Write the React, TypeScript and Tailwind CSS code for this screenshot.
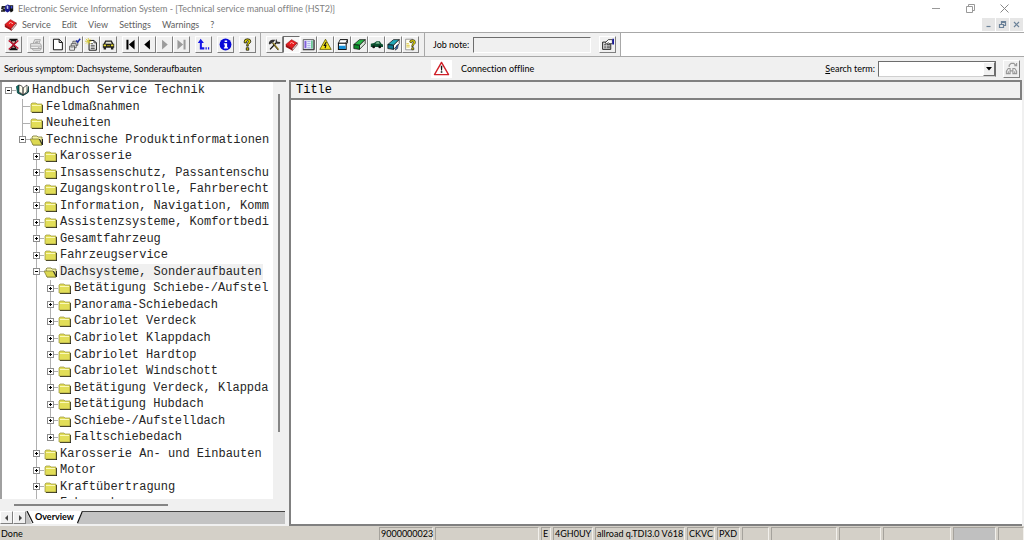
import React from "react";

type IconName =
  | "exit" | "print" | "page" | "copies" | "newnote" | "car" | "first" | "prev" | "next" | "last"
  | "back" | "info" | "help" | "tools" | "book" | "panel" | "warn" | "box" | "greenbook" | "greencar"
  | "tealbook" | "note";

const K = "#111";

const drawings: Record<IconName, React.ReactNode> = {
  exit: (
    <>
      <path d="M3 1h10v2H3zM3 13h10v2H3zM5 3h6v3L9 8l2 3v2H5v-2l2-3-2-2z" fill={K} />
      <path d="M6 4h4v1L8 7 6 5zM6 12l2-2 2 2z" fill="#d9b0a8" />
      <path d="M2 3l12 10M14 3L2 14" stroke="#c8102a" strokeWidth="1.5" fill="none" />
    </>
  ),
  print: (
    <g fill="none" stroke="#a6a6a6" strokeWidth="1.2">
      <path d="M5 7l2-5h7l-2 5M2 7h12l1 2v4H2zM2 10h13M4 13l1 2h9l1-2M8 4h4M7 5.500h4M11 12h2" />
    </g>
  ),
  page: <path d="M3 1.500h7l4 4v9H3zM10 1.500v4h4" fill="#fff" stroke={K} strokeWidth="1.200" />,
  copies: (
    <>
      <g fill="#fff" stroke="#444" strokeWidth="1">
        <path d="M6 4h6v5H6z" />
        <path d="M4 7h6v5H4z" />
        <path d="M2 10h6v5H2z" />
      </g>
      <path d="M7 6h4M5 9h4M3 12h4" stroke="#777" />
      <path d="M10 3l2 2 3-4" stroke="#1b2ca8" strokeWidth="1.800" fill="none" />
    </>
  ),
  newnote: (
    <>
      <path d="M5 3h6l3 3v9H5z" fill="#fff" stroke={K} strokeWidth="1.200" />
      <path d="M11 3v3h3M7 7h3M7 9h5M7 11h5M7 13h5" stroke="#333" fill="none" />
      <path d="M1 1l6 6M7 1L1 7M4 0v8M0 4h8" stroke="#d8ca30" strokeWidth="1" />
    </>
  ),
  car: (
    <>
      <path d="M4 3h8l2 4h1v5h-1v2h-3v-2H5v2H2v-2H1V7h1z" fill="#222" />
      <path d="M5 4.500h6l1 2.500H4z" fill="#e2e2d0" />
      <path d="M2 8h3v2H2zM11 8h3v2h-3z" fill="#e8dc30" />
      <path d="M6 9h4v1H6z" fill="#c0b000" />
    </>
  ),
  first: <path d="M3 2h2.500v12H3zM13 2v12L6 8z" fill="#000" />,
  prev: <path d="M11 2v12L4 8z" fill="#000" />,
  next: <path d="M5 2v12l7-6z" fill="#9b9b9b" />,
  last: <path d="M3 2v12l7-6zM10.500 2H13v12h-2.500z" fill="#9b9b9b" />,
  back: (
    <path d="M4.500 1L1 6h2.500v8H9v-2.500H6V6h2.500zM10.500 11.500H12V14h-1.500zM13.500 11.500H15V14h-1.500z" fill="#1414e6" />
  ),
  info: (
    <>
      <circle cx="8" cy="8" r="7.300" fill="#0808d8" />
      <path d="M7 3h3v2H7zM6 6.500h4v5h1V13H6v-1.500h1V8H6z" fill="#fff" />
    </>
  ),
  help: (
    <>
      <path d="M4 6V4q0-3 4-3t4 3q0 2-2 3T9 10H7q0-3 1-4t1-2q0-1-1-1T6.500 6z" fill="#e0d400" stroke={K} strokeWidth="1" />
      <path d="M6.500 12h3v3h-3z" fill="#e0d400" stroke={K} strokeWidth="1" />
    </>
  ),
  tools: (
    <>
      <path d="M2.500 14L11 5" stroke={K} strokeWidth="1.600" fill="none" />
      <path d="M6 6l7 8.500" stroke="#a08c30" strokeWidth="2" />
      <path d="M5.500 6.500l7 8.500" stroke={K} strokeWidth=".8" />
      <path d="M1 7q0-4 4-5h4L7 5 5 6 2 8zM10 1l1.500 3.500L15 5v1.500q-3 1.500-5-.5-1.500-2 0-5z" fill="#333" />
    </>
  ),
  book: (
    <>
      <path d="M1 8l7-6 7 4-6 7z" fill="#e81c20" stroke="#8a0a0c" strokeWidth=".7" />
      <path d="M1 8l8 5v2.500L1 11z" fill="#9d0c10" />
      <path d="M9 13l6-7v2.500l-6 7z" fill="#fff" stroke="#6d0b0b" strokeWidth=".8" />
      <path d="M6 7l2-1.500L11 7" stroke="#ffb9b0" strokeWidth="1.200" fill="none" />
    </>
  ),
  panel: (
    <>
      <path d="M1.500 2h13v12h-13z" fill="#f4f4ff" stroke="#444" />
      <path d="M3 3.500h2.500v9H3z" fill="#8060d8" />
      <path d="M6.500 4.500h4M6.500 7h4M6.500 9.500h4M6.500 12h4" stroke="#7a8cd8" strokeWidth=".9" />
      <path d="M11.500 3h1.500v10h-1.500z" fill="#28b060" />
      <path d="M1 14.500h14v-12" stroke="#222" fill="none" />
    </>
  ),
  warn: (
    <>
      <path d="M8 1.500L15 14H1z" fill="#f2e21a" stroke="#5a5400" strokeWidth="1" />
      <path d="M9 5L6.500 9H8.500L7.500 12.500" stroke={K} strokeWidth="1.400" fill="none" />
    </>
  ),
  box: (
    <>
      <path d="M5 2h9v4l-2 2" fill="#fff" stroke={K} strokeWidth="1.200" />
      <path d="M5 2L3 6.500h9L14 2z" fill="#fff" stroke={K} />
      <path d="M3 6.500h9.500V14H3z" fill="#fff" stroke={K} strokeWidth="1.300" />
      <path d="M3.600 9.500h8.300v4H3.600z" fill="#1690d8" />
    </>
  ),
  greenbook: (
    <>
      <path d="M1 8l7-6h7L8 9z" fill="#28b848" stroke={K} strokeWidth=".9" />
      <path d="M8 9l7-7v5l-7 7z" fill="#d8e8d8" stroke={K} strokeWidth=".9" />
      <path d="M1 8l7 1v5l-7-1z" fill="#0d8c2a" stroke={K} strokeWidth=".9" />
    </>
  ),
  greencar: (
    <>
      <path d="M1 7l4-1 3-2h4l2 3 2 1v3H1z" fill="#0c5030" />
      <path d="M7 6l1.500-1H11l1 2H7z" fill="#7fb895" />
      <circle cx="4.500" cy="11" r="1.700" fill={K} />
      <circle cx="12" cy="11" r="1.700" fill={K} />
    </>
  ),
  tealbook: (
    <>
      <path d="M1 8l7-6h7L8 9z" fill="#22a8b8" stroke={K} strokeWidth=".9" />
      <path d="M8 9l7-7v5l-7 7z" fill="#fff" stroke={K} strokeWidth=".9" />
      <path d="M1 8l7 1v5l-7-1z" fill="#0e7890" stroke={K} strokeWidth=".9" />
      <path d="M10 15l2-6 2-1-1 5z" fill="#3c6cc0" stroke={K} strokeWidth=".6" />
    </>
  ),
  note: (
    <>
      <path d="M2 1.500h9v13H2z" fill="#fffef0" stroke="#888" />
      <path d="M7 5q0-3 3.500-3T14 5q0 2-1.500 3T11 10.500H9.500q0-2 1-3T11.500 5q0-1-1-1T9 6z" fill="#f0e400" stroke={K} strokeWidth=".8" />
      <path d="M9.500 12H12v2.500H9.500z" fill="#f0e400" stroke={K} strokeWidth=".8" />
      <path d="M3 7h3M3 9h4M3 11h4" stroke="#d8c020" />
    </>
  ),
};

function Icon({ name }: { name: IconName }) {
  return (
    <svg viewBox="0 0 16 16" className="size-[13px] shrink-0" aria-hidden="true">
      {drawings[name]}
    </svg>
  );
}

function ToolButton({ name, label, pressed = false, disabled = false }: {
  name: IconName; label: string; pressed?: boolean; disabled?: boolean;
}) {
  const edge = pressed
    ? "border-t-[#6d6d6d] border-l-[#6d6d6d] border-r-white border-b-white bg-[#f8f8f8]"
    : "border-t-white border-l-white border-r-[#808080] border-b-[#808080] bg-[#f0f0f0]";
  return (
    <button
      type="button"
      aria-label={label}
      disabled={disabled}
      className={`flex size-[17px] shrink-0 items-center justify-center border ${edge}`}
    >
      <Icon name={name} />
    </button>
  );
}

type Tool = { name: IconName; label: string; pressed?: boolean; disabled?: boolean };

const mainTools: Tool[][] = [
  [{ name: "exit", label: "Exit" }],
  [{ name: "print", label: "Print", disabled: true }],
  [
    { name: "page", label: "New" },
    { name: "copies", label: "Select documents" },
    { name: "newnote", label: "New note" },
    { name: "car", label: "Vehicle" },
  ],
  [
    { name: "first", label: "First" },
    { name: "prev", label: "Previous" },
    { name: "next", label: "Next", disabled: true },
    { name: "last", label: "Last", disabled: true },
  ],
  [{ name: "back", label: "Back" }],
  [{ name: "info", label: "Information" }],
  [{ name: "help", label: "Help" }],
];

const moduleTools: Tool[] = [
  { name: "tools", label: "Workshop" },
  { name: "book", label: "Service manual", pressed: true },
  { name: "panel", label: "Wiring" },
  { name: "warn", label: "Campaigns" },
  { name: "box", label: "Parts" },
  { name: "greenbook", label: "Maintenance" },
  { name: "greencar", label: "Vehicle data" },
  { name: "tealbook", label: "Repair manuals" },
  { name: "note", label: "Hints" },
];

type Kind = "plus" | "minus" | "leaf";
type Node = { text: string; level: number; kind: Kind; icon: "manual" | "folder" | "open"; selected?: boolean; end?: boolean };

const nodes: Node[] = [
  { text: "Handbuch Service Technik", level: 0, kind: "minus", icon: "manual", end: true },
  { text: "Feldmaßnahmen", level: 1, kind: "leaf", icon: "folder" },
  { text: "Neuheiten", level: 1, kind: "leaf", icon: "folder" },
  { text: "Technische Produktinformationen", level: 1, kind: "minus", icon: "open", end: true },
  { text: "Karosserie", level: 2, kind: "plus", icon: "folder" },
  { text: "Insassenschutz, Passantenschu", level: 2, kind: "plus", icon: "folder" },
  { text: "Zugangskontrolle, Fahrberecht", level: 2, kind: "plus", icon: "folder" },
  { text: "Information, Navigation, Komm", level: 2, kind: "plus", icon: "folder" },
  { text: "Assistenzsysteme, Komfortbedi", level: 2, kind: "plus", icon: "folder" },
  { text: "Gesamtfahrzeug", level: 2, kind: "plus", icon: "folder" },
  { text: "Fahrzeugservice", level: 2, kind: "plus", icon: "folder" },
  { text: "Dachsysteme, Sonderaufbauten", level: 2, kind: "minus", icon: "open", selected: true },
  { text: "Betätigung Schiebe-/Aufstel", level: 3, kind: "plus", icon: "folder" },
  { text: "Panorama-Schiebedach", level: 3, kind: "plus", icon: "folder" },
  { text: "Cabriolet Verdeck", level: 3, kind: "plus", icon: "folder" },
  { text: "Cabriolet Klappdach", level: 3, kind: "plus", icon: "folder" },
  { text: "Cabriolet Hardtop", level: 3, kind: "plus", icon: "folder" },
  { text: "Cabriolet Windschott", level: 3, kind: "plus", icon: "folder" },
  { text: "Betätigung Verdeck, Klappda", level: 3, kind: "plus", icon: "folder" },
  { text: "Betätigung Hubdach", level: 3, kind: "plus", icon: "folder" },
  { text: "Schiebe-/Aufstelldach", level: 3, kind: "plus", icon: "folder" },
  { text: "Faltschiebedach", level: 3, kind: "plus", icon: "folder", end: true },
  { text: "Karosserie An- und Einbauten", level: 2, kind: "plus", icon: "folder" },
  { text: "Motor", level: 2, kind: "plus", icon: "folder" },
  { text: "Kraftübertragung", level: 2, kind: "plus", icon: "folder" },
];

function Expander({ kind }: { kind: Kind }) {
  if (kind === "leaf") {
    return (
      <span className="flex h-[7px] shrink-0 items-center pl-1">
        <span className="h-full w-px bg-[#b0b0b0]" />
        <span className="h-px flex-1 bg-[#b0b0b0]" />
      </span>
    );
  }
  return (
    <span className="flex shrink-0 items-center pl-px">
      <span className="grid size-[7px] place-items-center border border-[#8c8c8c] bg-white">
        <span className="col-start-1 row-start-1 h-px w-[3px] bg-black" />
        {kind === "plus" && <span className="col-start-1 row-start-1 h-[3px] w-px bg-black" />}
      </span>
      <span className="h-px flex-1 bg-[#b0b0b0]" />
    </span>
  );
}

function NodeIcon({ icon }: { icon: Node["icon"] }) {
  return (
    <svg viewBox="0 0 13 12" className="h-[12px] w-[13px] shrink-0" aria-hidden="true">
      {icon === "manual" && (
        <>
          <path d="M.5 2.500L3 1v7.500l4 2.500 5.500-3V2.500L11.500 9 7 11.500 1.500 9z" fill="#0d7e74" stroke="#083c3a" strokeWidth=".8" />
          <path d="M3 1q3 0 4 3v7Q6 8.500 3 8.500zM7 4l4-3v6.500L7 11z" fill="#fffef0" stroke="#222" strokeWidth=".7" />
        </>
      )}
      {icon === "folder" && (
        <>
          <path d="M2 3h5l1 1h5v8H2z" fill="#222" />
          <path d="M1 3l1-1h4l1 1h5v8H1z" fill="#e2de58" stroke="#98943c" strokeWidth=".7" />
          <path d="M2 4.500h9" stroke="#fbf9b8" />
        </>
      )}
      {icon === "open" && (
        <>
          <path d="M2 3l1-1h4l1 1h4v8H3z" fill="#f7f5a8" stroke="#77752e" strokeWidth=".8" />
          <path d="M0 5h9l3 6H3z" fill="#dcd850" stroke="#77752e" strokeWidth=".7" />
          <path d="M9.500 5l3 6V5" fill="none" stroke="#222" />
        </>
      )}
    </svg>
  );
}

function TreeRow({ node }: { node: Node }) {
  const above = node.level > 0 ? "bg-[#b0b0b0]" : "bg-transparent";
  const below = node.end ? "bg-transparent" : "bg-[#b0b0b0]";
  return (
    <li
      role="treeitem"
      aria-level={node.level + 1}
      aria-selected={!!node.selected}
      className="flex min-h-0 flex-1 basis-0 items-stretch whitespace-nowrap"
    >
      {Array.from({ length: node.level }, (_, i) => (
        <span key={i} className="flex w-[14px] shrink-0 pl-[6px]">
          <span className={i === 2 ? "w-px bg-[#b0b0b0]" : "w-px"} />
        </span>
      ))}
      <span className="flex w-[14px] shrink-0 flex-col pl-[2px]">
        <span className={`ml-1 w-px flex-1 ${above}`} />
        <Expander kind={node.kind} />
        <span className={`ml-1 w-px flex-1 ${below}`} />
      </span>
      <span className="flex items-center gap-[2px]">
        <NodeIcon icon={node.icon} />
        <span className={`px-px leading-4 ${node.selected ? "bg-[#f0f0f0]" : ""}`}>{node.text}</span>
      </span>
    </li>
  );
}

const statusCells = [
  { text: "9000000023", width: "w-[54px]" },
  { text: "", width: "w-[104px]" },
  { text: "E", width: "w-[10px]" },
  { text: "4GH0UY", width: "w-[40px]" },
  { text: "allroad q.TDI3.0 V618", width: "w-[90px]" },
  { text: "CKVC", width: "w-[28px]" },
  { text: "PXD", width: "w-[23px]" },
  { text: "", width: "w-[27px]" },
  { text: "", width: "w-[66px]" },
  { text: "", width: "w-[42px]" },
  { text: "", width: "w-[68px]" },
  { text: "", width: "w-[43px] bg-[#c0c0c0]" },
  { text: "", width: "w-[26px]" },
];

export default function App() {
  return (
    <div className="flex h-screen flex-col overflow-hidden bg-[#f0f0f0] font-['Lato','Open_Sans',sans-serif] text-[9px] leading-3 text-black [font-variant-ligatures:none]">
      <header className="shrink-0 bg-white text-[#808080]">
        <div className="flex h-[17px] items-center">
          <svg viewBox="0 0 16 12" className="ml-px h-[11px] w-[13px]" aria-hidden="true">
            <path d="M1 3h4v2H3v1h2v4H0V8h2V7H0z" fill="#222" />
            <path d="M5 3l3-2 3 1v7l-3 2-3-2z" fill="#16168c" />
            <path d="M7 2l2 1v4L7 6z" fill="#c8d0f0" />
            <path d="M11 2h4v7l-3 2-1-2z" fill="#111" />
            <path d="M12 3h2v3h-2z" fill="#4050e0" />
          </svg>
          <h1 className="ml-1 whitespace-nowrap">
            Electronic Service Information System - [Technical service manual offline (HST2)]
          </h1>
          <div className="ml-auto mr-[15px] flex items-center gap-[25px]">
            <button type="button" aria-label="Minimize">
              <svg viewBox="0 0 9 9" className="size-[9px]"><path d="M0 4.500h8" stroke="#999" /></svg>
            </button>
            <button type="button" aria-label="Restore">
              <svg viewBox="0 0 9 9" className="size-[9px]" fill="none" stroke="#999">
                <path d="M.5 2.500h6v6h-6zM2.500 2.500v-2h6v6h-2" />
              </svg>
            </button>
            <button type="button" aria-label="Close">
              <svg viewBox="0 0 9 9" className="size-[9px]"><path d="M.5.5l8 8M8.500.5l-8 8" stroke="#888" /></svg>
            </button>
          </div>
        </div>
        <div className="flex h-[15px] items-center text-[#606060]">
          <span className="ml-1 flex"><Icon name="book" /></span>
          <nav className="ml-[5px] flex gap-[11px]">
            <button type="button">Service</button>
            <button type="button">Edit</button>
            <button type="button">View</button>
            <button type="button">Settings</button>
            <button type="button">Warnings</button>
            <button type="button">?</button>
          </nav>
          <div className="ml-auto mr-px flex gap-px">
            {[
              ["Minimize document", "M2.500 6.500h4"],
              ["Restore document", "M1.500 4.500h4v3h-4zM3.500 4V1.500h4v4H6M3.500 2.500h4"],
              ["Close document", "M2 2l5 5M7 2L2 7"],
            ].map(([label, d]) => (
              <button key={label} type="button" aria-label={label} className="flex h-[13px] w-[13px] items-center justify-center bg-[#e6e6e6]">
                <svg viewBox="0 0 9 9" className="size-[9px]" fill="none" stroke="#6b8299" strokeWidth="1.200"><path d={d} /></svg>
              </button>
            ))}
          </div>
        </div>
      </header>

      <div className="flex h-[25px] shrink-0 border-y border-[#a8a8a8] bg-white">
        <div className="flex items-center gap-[5px] border-r border-[#a8a8a8] bg-[#f0f0f0] pl-[5px] pr-1">
          {mainTools.map((group, i) => (
            <div key={i} className="flex">
              {group.map((t) => <ToolButton key={t.name} {...t} />)}
            </div>
          ))}
        </div>
        <div className="flex items-center border-r border-[#a8a8a8] bg-[#f0f0f0] px-[5px]">
          {moduleTools.map((t) => <ToolButton key={t.name} {...t} />)}
        </div>
        <div className="flex items-center border-r border-[#a8a8a8] bg-[#f0f0f0] pl-[8px] pr-1">
          <label htmlFor="job" className="w-10 whitespace-nowrap">Job note:</label>
          <input id="job" className="h-4 w-[118px] border border-b-white border-l-[#6d6d6d] border-r-white border-t-[#6d6d6d] bg-[#f0f0f0] outline-none" />
          <button type="button" aria-label="Edit job note" className="ml-2 flex size-[17px] items-center justify-center border border-b-[#808080] border-l-white border-r-[#808080] border-t-white">
            <svg viewBox="0 0 16 16" className="size-[13px]" aria-hidden="true">
              <path d="M2 5h10v9H2z" fill="#ddd" stroke="#222" strokeWidth="1.200" />
              <path d="M4 8h2M7 8h4M4 10h2M7 10h4M4 12h2M7 12h4" stroke="#333" />
              <path d="M5 6l4-4h5v5h-3L9 6 7 7z" fill="#fff" stroke="#222" />
              <path d="M14 1h2v7h-2z" fill="#1616a0" />
            </svg>
          </button>
        </div>
      </div>

      <div className="flex h-[23px] shrink-0 items-center pl-1">
        <span className="w-[427px] whitespace-nowrap">Serious symptom: Dachsysteme, Sonderaufbauten</span>
        <span className="flex h-[18px] w-[21px] items-center justify-center bg-white">
          <svg viewBox="0 0 18 16" className="h-[15px] w-[17px]" aria-hidden="true">
            <path d="M9 1.500L16.500 14.500h-15z" fill="#fff" stroke="#d02028" strokeWidth="1.500" strokeLinejoin="round" />
            <path d="M8.200 5h1.700l-.3 5H8.500zM8.200 11h1.700v1.600H8.200z" fill="#111" />
          </svg>
        </span>
        <span className="ml-[9px] whitespace-nowrap">Connection offline</span>
        <div className="ml-auto mr-1 flex items-center">
          <label htmlFor="term" className="mr-[3px] whitespace-nowrap"><u>S</u>earch term:</label>
          <span className="grid h-4 w-[118px] grid-cols-[1fr_12px] border border-b-[#d0d0d0] border-l-[#6d6d6d] border-r-[#6d6d6d] border-t-[#6d6d6d] bg-white">
            <select id="term" className="col-span-2 col-start-1 row-start-1 w-full appearance-none bg-white outline-none">
              <option></option>
            </select>
            <span className="pointer-events-none col-start-2 row-start-1 flex items-center justify-center border border-b-[#6d6d6d] border-l-white border-r-[#6d6d6d] border-t-white bg-[#f0f0f0]">
              <svg viewBox="0 0 6 4" className="h-[4px] w-[6px]"><path d="M0 0h6L3 3.500z" fill="#000" /></svg>
            </span>
          </span>
          <button type="button" aria-label="Search" className="ml-[7px] flex h-[18px] w-[17px] items-center justify-center border border-b-[#808080] border-l-white border-r-[#808080] border-t-white">
            <svg viewBox="0 0 14 14" className="size-[13px]" fill="none" stroke="#989898" strokeWidth="1.200" aria-hidden="true">
              <path d="M1.500 12.500V10l2-3h2v5.500zM8.500 12.500V7h2l2 3v2.500zM5.500 9.500h3M3.500 10v2M10.500 10v2M4.500 5.500v-2l2-2h3l2 2M12.500 1v3H10" />
            </svg>
          </button>
        </div>
      </div>

      <main className="flex min-h-0 flex-1">
        <section className="flex w-[286px] shrink-0 flex-col border-t-2 border-t-[#7c7c7c] pr-px">
          <div className="flex min-h-0 flex-1 border-l-2 border-[#a0a0a0]">
            <ul role="tree" aria-label="Service manual" className="flex min-w-0 flex-1 flex-col overflow-hidden bg-white font-['Liberation_Mono',monospace] text-[12px] text-[#262626]">
              {nodes.map((n) => <TreeRow key={n.text} node={n} />)}
              <li role="treeitem" aria-level={3} aria-selected={false} className="flex h-1 shrink-0 overflow-hidden">
                <span className="ml-[34px] w-px shrink-0 bg-[#b0b0b0]" />
                <span className="ml-[23px] leading-4">Fahrwerk</span>
              </li>
            </ul>
            <div className="flex w-3 justify-center pb-[67px] pt-3">
              <div className="w-[2px] bg-[#858585]" />
            </div>
          </div>
          <div className="flex h-3 shrink-0 items-center pl-[14px]">
            <div className="h-[2px] w-[154px] bg-[#858585]" />
          </div>
          <div className="flex h-[13px] shrink-0 bg-[#c3c3c3]">
            {["M5 1v6L2 4z", "M3 1v6l3-3z"].map((d, i) => (
              <button key={d} type="button" aria-label={i ? "Next tab" : "Previous tab"} className="flex w-[13px] items-center justify-center border border-b-[#808080] border-l-white border-r-[#808080] border-t-white bg-[#f0f0f0]">
                <svg viewBox="0 0 8 8" className="size-[8px]"><path d={d} fill="#444" /></svg>
              </button>
            ))}
            <button type="button" className="flex bg-white font-bold text-black">
              <svg viewBox="0 0 8 13" className="h-[13px] w-[8px]"><path d="M0 0l6 13H0z" fill="#c3c3c3" /><path d="M1 0l6 12" stroke="#111" strokeWidth="1.200" /></svg>
              <span className="px-px">Overview</span>
              <svg viewBox="0 0 8 13" className="h-[13px] w-[8px]"><path d="M8 0v13H2z" fill="#c3c3c3" /><path d="M7.500 0l-5 12" stroke="#111" strokeWidth="1.200" /></svg>
            </button>
            <span className="flex-1 border-t border-[#444]" />
          </div>
          <div className="h-[2px] shrink-0" />
        </section>
        <section className="ml-[3px] mr-[2px] flex min-w-0 flex-1 flex-col border-b-2 border-l-2 border-t-2 border-[#808080] bg-white">
          <table className="w-full border-collapse">
            <thead>
              <tr>
                <th className="h-[17px] border-b-2 border-r-2 border-[#808080] bg-[#f0f0f0] py-0 pl-[5px] text-left font-['Liberation_Mono',monospace] text-[12px] font-normal leading-[15px]">Title</th>
              </tr>
            </thead>
          </table>
        </section>
      </main>

      <footer className="flex h-[14px] shrink-0 gap-[2px] overflow-hidden bg-[#d4d0c8] pt-px">
        <span className="flex-1 pl-px pt-px">Done</span>
        {statusCells.map((c, i) => (
          <span key={i} className={`shrink-0 whitespace-nowrap border-l border-r border-t border-l-[#a5a29c] border-r-[#f2f0ec] border-t-[#a5a29c] pl-px ${c.width}`}>
            {c.text}
          </span>
        ))}
      </footer>
    </div>
  );
}
